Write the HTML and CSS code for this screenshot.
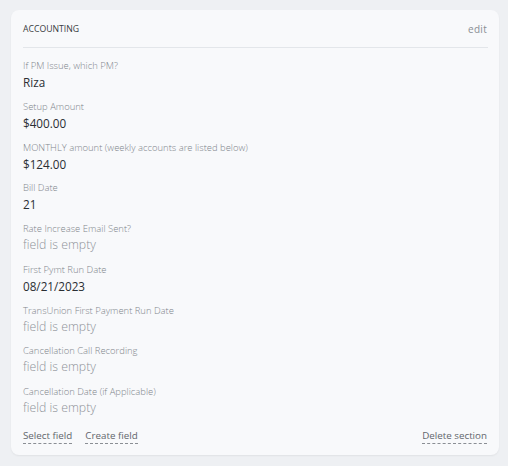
FILE: index.html
```html
<html lang="en">
<head>
    <meta charset="UTF-8">
    <title>Accounting</title>
    <link rel="stylesheet" href="styles.css">
</head>
<body>
    <section class="card">
        <div class="card-head">
            <span class="card-title">ACCOUNTING</span>
            <a href="#" class="edit">edit</a>
        </div>
        <div class="fields">
            <div class="field">
                <div class="label">If PM Issue, which PM?</div>
                <div class="value">Riza</div>
            </div>
            <div class="field">
                <div class="label">Setup Amount</div>
                <div class="value">$400.00</div>
            </div>
            <div class="field">
                <div class="label">MONTHLY amount (weekly accounts are listed below)</div>
                <div class="value">$124.00</div>
            </div>
            <div class="field">
                <div class="label">Bill Date</div>
                <div class="value">21</div>
            </div>
            <div class="field">
                <div class="label">Rate Increase Email Sent?</div>
                <div class="value empty">field is empty</div>
            </div>
            <div class="field">
                <div class="label">First Pymt Run Date</div>
                <div class="value">08/21/2023</div>
            </div>
            <div class="field">
                <div class="label">TransUnion First Payment Run Date</div>
                <div class="value empty">field is empty</div>
            </div>
            <div class="field">
                <div class="label">Cancellation Call Recording</div>
                <div class="value empty">field is empty</div>
            </div>
            <div class="field">
                <div class="label">Cancellation Date (if Applicable)</div>
                <div class="value empty">field is empty</div>
            </div>
        </div>
        <div class="card-foot">
            <div class="foot-left">
                <a href="#" class="dash">Select field</a>
                <a href="#" class="dash">Create field</a>
            </div>
            <a href="#" class="dash">Delete section</a>
        </div>
    </section>
</body>
</html>
```

FILE: styles.css
```css
body {
    margin: 0;
    padding: 10px 9px 11px 11px;
    background-color: #eef0f3;
    font-family: "Open Sans", "Noto Sans", sans-serif;
}
a {
    text-decoration: none;
}
.card {
    background-color: #f8f9fb;
    border-radius: 8px;
    box-shadow: 0 1px 2px rgba(0, 0, 0, 0.06);
    padding: 0 11px 11px 12px;
    height: 445px;
    box-sizing: border-box;
    display: flex;
    flex-direction: column;
}
.card-head {
    display: flex;
    justify-content: space-between;
    align-items: center;
    padding: 13px 1px 12px 0;
    border-bottom: 1px solid #e3e6ea;
    line-height: 12px;
}
.card-title {
    font-size: 8.7px;
    color: #3a3d42;
}
.edit {
    font-size: 10px;
    color: #8a8e94;
    letter-spacing: 0.3px;
}
.fields {
    display: flex;
    flex-direction: column;
    gap: 8.75px;
    padding-top: 11px;
}
.label {
    font-size: 9.45px;
    line-height: 14px;
    font-weight: 300;
    color: #80858b;
}
.value {
    font-size: 11.7px;
    line-height: 18px;
    color: #2a2e33;
}
.value.empty {
    font-size: 12.3px;
    font-weight: 300;
    color: #8e9298;
}
.card-foot {
    margin-top: auto;
    display: flex;
    justify-content: space-between;
    align-items: center;
    padding-right: 1px;
}
.foot-left {
    display: flex;
    gap: 13px;
}
.dash {
    font-size: 9.8px;
    line-height: 14px;
    color: #62666c;
    border-bottom: 1px dashed #8a8e94;
}
```
